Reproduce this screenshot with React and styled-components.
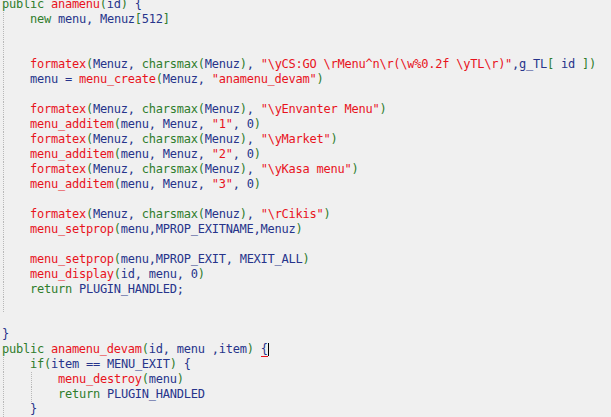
import React from 'react';
import styled, { createGlobalStyle } from 'styled-components';

const GlobalStyle = createGlobalStyle`
  html, body {
    margin: 0;
    padding: 0;
    background: #f0f0f0;
    overflow: hidden;
  }
`

const KEYWORDS = ['public', 'new', 'return', 'if', 'charsmax']

const colors = {
  kw: '#2f7d2c',
  fn: '#e8131d',
  str: '#e8131d',
  paren: '#2f7d2c',
  id: '#27348b',
}

// [text, guide levels, caret column]
const source = [
  ['public anamenu(id) {', 0],
  ['    new menu, Menuz[512]', 1],
  ['', 1],
  ['', 1],
  ['    formatex(Menuz, charsmax(Menuz), "\\yCS:GO \\rMenu^n\\r(\\w%0.2f \\yTL\\r)",g_TL[ id ])', 1],
  ['    menu = menu_create(Menuz, "anamenu_devam")', 1],
  ['', 1],
  ['    formatex(Menuz, charsmax(Menuz), "\\yEnvanter Menu")', 1],
  ['    menu_additem(menu, Menuz, "1", 0)', 1],
  ['    formatex(Menuz, charsmax(Menuz), "\\yMarket")', 1],
  ['    menu_additem(menu, Menuz, "2", 0)', 1],
  ['    formatex(Menuz, charsmax(Menuz), "\\yKasa menu")', 1],
  ['    menu_additem(menu, Menuz, "3", 0)', 1],
  ['', 1],
  ['    formatex(Menuz, charsmax(Menuz), "\\rCikis")', 1],
  ['    menu_setprop(menu,MPROP_EXITNAME,Menuz)', 1],
  ['', 1],
  ['    menu_setprop(menu,MPROP_EXIT, MEXIT_ALL)', 1],
  ['    menu_display(id, menu, 0)', 1],
  ['    return PLUGIN_HANDLED;', 1],
  ['', 1],
  ['', 0],
  ['}', 0],
  ['public anamenu_devam(id, menu ,item) {', 0, 37],
  ['    if(item == MENU_EXIT) {', 1],
  ['        menu_destroy(menu)', 2],
  ['        return PLUGIN_HANDLED', 2],
  ['    }', 1],
  ['', 1],
]

function tokenize(line) {
  const re = /("(?:[^"\\]|\\.)*")|([A-Za-z_]\w*)|(\d+(?:\.\d+)?)|(\s+)|([()[\]])|(.)/g
  const out = []
  let m
  while ((m = re.exec(line))) {
    const start = m.index
    if (m[1]) out.push({ text: m[1], kind: 'str', start })
    else if (m[2]) {
      const rest = line.slice(re.lastIndex).trimStart()
      let kind = 'id'
      if (KEYWORDS.includes(m[2])) kind = 'kw'
      else if (rest[0] === '(') kind = 'fn'
      out.push({ text: m[2], kind, start })
    } else if (m[3]) out.push({ text: m[3], kind: 'id', start })
    else if (m[4]) out.push({ text: m[4], kind: 'id', start })
    else if (m[5]) out.push({ text: m[5], kind: 'paren', start })
    else out.push({ text: m[6], kind: 'id', start })
  }
  return out
}

function CodeLine({ text, guides, caret }) {
  const indent = text.match(/^ */)[0].length
  const levels = Math.max(Math.floor(indent / 4), guides)
  const body = text.slice(levels * 4 > indent ? indent : levels * 4)
  const tokens = tokenize(body)
  const offset = text.length - body.length
  return (
    <Line>
      {Array.from({ length: levels }).map((_, i) => (
        <Indent key={i} $guide={i < guides} />
      ))}
      {tokens.map((t, i) => {
        const col = t.start + offset
        if (caret === col) {
          return (
            <React.Fragment key={i}>
              <Token $kind={t.kind} $match>{t.text}</Token>
              <Caret />
            </React.Fragment>
          )
        }
        return <Token key={i} $kind={t.kind}>{t.text}</Token>
      })}
    </Line>
  )
}

export default function App() {
  return (
    <>
      <GlobalStyle />
      <Editor>
        {source.map(([text, guides, caret], i) => (
          <CodeLine key={i} text={text} guides={guides} caret={caret} />
        ))}
      </Editor>
    </>
  )
}

const Editor = styled.div`
width: 611px;
height: 420px;
overflow: hidden;
background: #f0f0f0;
padding: 0 0 0 2px;
margin-top: -3px;
box-sizing: border-box;
font-family: "DejaVu Sans Mono", "Liberation Mono", monospace;
font-size: 12px;
letter-spacing: -0.24px;
`
const Line = styled.div`
display: flex;
height: 15px;
line-height: 15px;
white-space: pre;
`
const Indent = styled.span`
flex: none;
width: 28px;
height: 15px;
background: ${props => props.$guide
  ? 'repeating-linear-gradient(to bottom, #b8b8b8 0 1px, transparent 1px 2px) 1px 0 / 1px 100% no-repeat'
  : 'none'};
`
const Token = styled.span`
color: ${props => colors[props.$kind]};
${props => props.$match && `
  box-shadow: inset 0 -1px 0 #e8131d;
`}
`
const Caret = styled.span`
width: 0;
height: 13px;
margin-top: 1px;
border-left: 1px solid #000;
`
